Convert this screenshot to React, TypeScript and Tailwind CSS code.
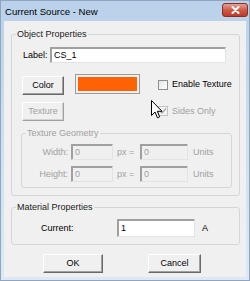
import React from "react";

const font = { fontFamily: '"Liberation Sans", Arial, sans-serif' };

function Btn({ label, w, disabled = false }: { label: string; w: string; disabled?: boolean }) {
  return (
    <button
      className={`${w} h-[19px] flex items-center justify-center bg-[#f0f0f0] border border-t-white border-l-white text-[9px] leading-[11px] ${
        disabled
          ? "border-r-[#a0a0a0] border-b-[#a0a0a0] text-[#a0a0a0] shadow-[inset_-1px_-1px_0_#d4d4d4]"
          : "border-r-[#696969] border-b-[#696969] text-black shadow-[inset_-1px_-1px_0_#a0a0a0]"
      }`}
    >
      {label}
    </button>
  );
}

function Field({ value, w, h = "h-[16px]", disabled = false }: { value: string; w: string; h?: string; disabled?: boolean }) {
  return (
    <div
      className={`${w} ${h} flex items-center pl-[3px] border border-t-[#a0a0a0] border-l-[#a0a0a0] border-r-[#e3e3e3] border-b-[#e3e3e3] shadow-[inset_1px_1px_0_#a0a0a0] text-[9px] leading-[11px] ${
        disabled ? "bg-[#f0f0f0] text-[#a0a0a0]" : "bg-white text-black"
      }`}
    >
      {value}
    </div>
  );
}

function Check({ checked = false, disabled = false }: { checked?: boolean; disabled?: boolean }) {
  return (
    <div
      className={`w-[10px] h-[10px] flex items-center justify-center border ${
        disabled ? "border-[#c2c2c2] bg-[#f4f4f4]" : "border-[#8e8f8f] bg-gradient-to-br from-[#e6e6e6] to-white"
      }`}
    >
      {checked && (
        <svg width="8" height="8" viewBox="0 0 8 8">
          <path d="M1 4 L3 6 L7 1.5" fill="none" stroke={disabled ? "#a8a8a8" : "#333"} strokeWidth="1.4" />
        </svg>
      )}
    </div>
  );
}

// group box: the caption sits over the top border line
function Group({ title, className, children, dim = false }: { title: string; className: string; children: React.ReactNode; dim?: boolean }) {
  return (
    <div className={`relative border border-[#d5d5d5] rounded-[3px] ${className}`}>
      <span
        className={`absolute left-[4px] top-[-7px] px-[1px] bg-[#f0f0f0] text-[9px] leading-[12px] ${
          dim ? "text-[#a0a0a0]" : "text-[#1a1a1a]"
        }`}
      >
        {title}
      </span>
      {children}
    </div>
  );
}

export default function App() {
  return (
    <div
      style={font}
      className="relative w-[250px] h-[281px] flex flex-col border border-[#8ea6c2] bg-gradient-to-b from-[#b9d1ea] via-[#cfdfef] to-[#dde8f4] select-none"
    >
      {/* Title bar */}
      <div className="h-[20px] flex items-center justify-between pl-[4px] pr-[1px]">
        <span className="text-[9.6px] leading-[12px] text-black mt-[1px]">Current Source - New</span>
        <div className="w-[26px] h-[14px] mt-[-3px] rounded-[3px] border border-[#8a2d22] bg-gradient-to-b from-[#e0a195] via-[#cf5a47] to-[#c0392a] flex items-center justify-center">
          <svg width="9" height="8" viewBox="0 0 9 8">
            <path d="M1.5 1 L7.5 7 M7.5 1 L1.5 7" stroke="#fff" strokeWidth="2" strokeLinecap="round" />
          </svg>
        </div>
      </div>

      {/* Content */}
      <div className="flex-1 mx-[3px] mb-[3px] bg-[#f0f0f0] flex flex-col">
        <Group title="Object Properties" className="mt-[13px] ml-[7px] w-[229px] pb-[7px]">
          <div className="flex items-center mt-[12px] pl-[11px] h-[16px]">
            <span className="w-[27px] text-[9px] leading-[11px] text-black">Label:</span>
            <Field value="CS_1" w="w-[176px]" />
          </div>

          <div className="flex items-start mt-[11px] pl-[10px] h-[21px]">
            <div className="mt-[2px]">
              <Btn label="Color" w="w-[42px]" />
            </div>
            <div className="ml-[11px] w-[65px] h-[20px] border border-[#9a9a9a] bg-[#f0f0f0] p-[2px]">
              <div className="w-full h-full bg-[#ff6105]" />
            </div>
            <div className="ml-[18px] mt-[5px] flex items-center gap-[4px]">
              <Check />
              <span className="text-[9px] leading-[11px] text-black">Enable Texture</span>
            </div>
          </div>

          <div className="flex items-center mt-[7px] pl-[10px] h-[18px]">
            <Btn label="Texture" w="w-[42px]" disabled />
            <div className="ml-[94px] flex items-center gap-[4px]">
              <Check checked disabled />
              <span className="text-[9px] leading-[11px] text-[#a0a0a0]">Sides Only</span>
            </div>
          </div>

          <Group title="Texture Geometry" dim className="mt-[13px] ml-[9px] w-[211px] pb-[5px]">
            {[
              ["Width:", "mt-[10px]"],
              ["Height:", "mt-[6px]"],
            ].map(([lab, mt]) => (
              <div key={lab} className={`flex items-center h-[16px] ${mt}`}>
                <span className="w-[46px] text-right text-[9px] leading-[11px] text-[#a0a0a0]">{lab}</span>
                <div className="ml-[3px]">
                  <Field value="0" w="w-[42px]" disabled />
                </div>
                <span className="ml-[4px] w-[23px] text-[9px] leading-[11px] text-[#a0a0a0]">px =</span>
                <Field value="0" w="w-[48px]" disabled />
                <span className="ml-[5px] text-[9px] leading-[11px] text-[#a0a0a0]">Units</span>
              </div>
            ))}
          </Group>
        </Group>

        <Group title="Material Properties" className="mt-[11px] ml-[7px] w-[229px] pb-[7px]">
          <div className="flex items-center mt-[11px] pl-[29px]">
            <span className="w-[76px] text-[9px] leading-[11px] text-black">Current:</span>
            <Field value="1" w="w-[78px]" h="h-[18px]" />
            <span className="ml-[7px] text-[9px] leading-[11px] text-black">A</span>
          </div>
        </Group>

        <div className="flex mt-[9px] pl-[39px]">
          <Btn label="OK" w="w-[60px]" />
          <div className="ml-[45px]">
            <Btn label="Cancel" w="w-[53px]" />
          </div>
        </div>
      </div>

      {/* Mouse cursor */}
      <svg className="absolute left-[150px] top-[99px]" width="12" height="19" viewBox="0 0 12 19">
        <path d="M0.5 0.5 L0.5 15.5 L4 12 L6.5 17.8 L8.7 16.8 L6.3 11.3 L11 11.3 Z" fill="#fff" stroke="#000" strokeWidth="1" strokeLinejoin="round" />
      </svg>
    </div>
  );
}
